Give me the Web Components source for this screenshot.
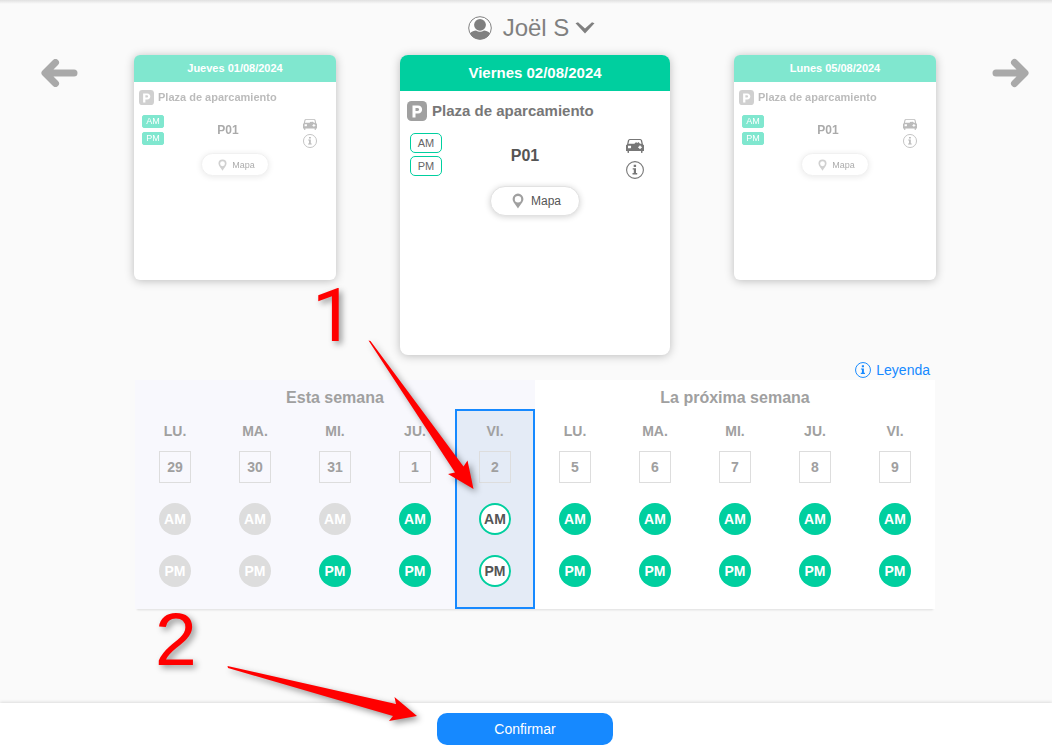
<!DOCTYPE html>
<html lang="es">
<head>
<meta charset="utf-8">
<meta name="viewport" content="width=device-width, initial-scale=1">
<title>Reservas</title>
<style>
  body {
    margin: 0;
    background: #fafafa;
    font-family: "Liberation Sans", Arial, sans-serif;
    --green: #00cf9f;
    --blue: #1689ff;
  }
</style>
</head>
<body>
<booking-app>
  <user-menu slot="header">Joël S</user-menu>
  <card-carousel slot="cards">
    <booking-card side day="Jueves 01/08/2024" place="P01">Plaza de aparcamiento</booking-card>
    <booking-card day="Viernes 02/08/2024" place="P01">Plaza de aparcamiento</booking-card>
    <booking-card side day="Lunes 05/08/2024" place="P01">Plaza de aparcamiento</booking-card>
  </card-carousel>
  <week-calendar slot="calendar">
    <step-mark number="1"></step-mark>
  </week-calendar>
  <confirm-bar slot="footer">
    <step-mark number="2" slot="mark"></step-mark>
    Confirmar
  </confirm-bar>
</booking-app>

<script>
const define = (name, html, setup) => {
  const template = document.createElement("template");
  template.innerHTML = html;

  customElements.define(name, class extends HTMLElement {
    constructor() {
      super();
      this.attachShadow({ mode: "open" }).appendChild(
        template.content.cloneNode(true)
      );
    }

    connectedCallback() {
      if (setup) setup(this, this.shadowRoot);
    }
  });
};

const icons = {
  user: `<svg viewBox="0 0 24 24"><circle cx="12" cy="12" r="11.3" fill="#fff" stroke="currentColor"/>
    <circle cx="12" cy="8.8" r="5.9" fill="currentColor"/>
    <path fill="currentColor" d="M1.9 17.2C4 15.3 6 14.5 8 14.5Q12 17 16 14.5C18 14.5 20 15.3 22.1 17.2A11.3 11.3 0 0 1 1.9 17.2Z"/></svg>`,
  chevron: `<svg viewBox="0 0 20 12"><path fill="currentColor" d="M.5 1.2 3 .2 10 6.600 17 .2l2.500 1L10 11.500Z"/></svg>`,
  arrow: `<svg viewBox="0 0 38 30"><path d="M5 15H33.5M23.5 4.5 34 15 23.5 25.5" fill="none" stroke="currentColor" stroke-width="7" stroke-linecap="round" stroke-linejoin="round"/></svg>`,
  parking: `<svg viewBox="0 0 20 20"><rect width="20" height="20" rx="4.5" fill="#a0a0a0"/>
    <path fill="#fff" fill-rule="evenodd" d="M5.5 4.5H11c5.500 0 5.500 8 0 8H8.500V16.500H5.500ZM8.500 7v3h2.100c2 0 2-3 0-3Z"/></svg>`,
  car: `<svg viewBox="0 0 18 14"><path fill="currentColor" fill-rule="evenodd" d="M3.500 0h11l1.500 1 1 4.500 1 .7V12h-1.500v1.300a.7.7 0 0 1-1.500 0V12H3v1.300a.7.7 0 0 1-1.500 0V12H0V6.200l1-.7L2 1ZM3.500 1 2.400 4.800H8.500C9 3.500 10.500 3.200 11.500 4L12.500 3l1.500 1.800h1.600L14.500 1ZM2 6.700v2.600h2.200c1 0 1-1 .8-2.600ZM13.500 6.500 13 7.700h-1v1h1l.5 1.200h1L15 8.700h1v-1h-1L14.500 6.500Z"/></svg>`,
  info: `<svg viewBox="0 0 18 18"><circle cx="9" cy="9" r="8.4" fill="none" stroke="currentColor" stroke-width="1.1"/>
    <path fill="currentColor" d="M7.7 3.7h2.400v2.200H7.700ZM6.700 7.200H10v4.900h1.200v1.400H6.500v-1.400h1.300V8.500H6.700Z"/></svg>`,
  pin: `<svg viewBox="0 0 12 16"><path fill="#a0a0a0" fill-rule="evenodd" d="M6 .6a5.400 5.400 0 0 1 5.400 5.400C11.400 9 8 12 6 15.500 4 12 .6 9 .6 6A5.400 5.400 0 0 1 6 .6ZM6 3.100a3.200 3.200 0 1 0 0 6.400 3.200 3.200 0 0 0 0-6.400Z"/></svg>`
};

define("ui-icon", `
  <style>
    :host { display: block; flex: none; }
    span { display: block; width: 100%; height: 100%; }
    svg { display: block; width: 100%; height: 100%; }
  </style>
  <span></span>
`, (el, root) => {
  root.querySelector("span").innerHTML = icons[el.getAttribute("name")] || "";
});

define("booking-app", `
  <style>
    :host {
      display: flex;
      flex-direction: column;
      min-height: 100vh;
      background: linear-gradient(#e0e0e0, #fafafa 4px);
    }
    main { flex: 1; padding-left: 18px; padding-bottom: 24px; }
  </style>
  <main>
    <slot name="header"></slot>
    <slot name="cards"></slot>
    <slot name="calendar"></slot>
  </main>
  <slot name="footer"></slot>
`);

define("user-menu", `
  <style>
    :host { display: flex; justify-content: center; height: 55px; padding-right: 7px; }
    button {
      display: flex;
      align-items: center;
      padding: 0;
      border: 0;
      background: none;
      color: #808080;
      font: 24px/28px "Liberation Sans", Arial, sans-serif;
      cursor: pointer;
    }
    .user { width: 24px; height: 24px; margin-right: 11px; }
    .chevron { width: 20px; height: 12px; margin-left: 6px; }
  </style>
  <button aria-haspopup="true">
    <ui-icon class="user" name="user"></ui-icon>
    <slot></slot>
    <ui-icon class="chevron" name="chevron"></ui-icon>
  </button>
`);

define("card-carousel", `
  <style>
    :host {
      display: flex;
      justify-content: space-between;
      align-items: flex-start;
      padding: 0 23px;
    }
    .cards { display: flex; align-items: flex-start; gap: 64px; }
    button {
      padding: 3px 0;
      border: 0;
      background: none;
      color: #a9a9a9;
      cursor: pointer;
    }
    ui-icon { width: 38px; height: 30px; }
    .prev ui-icon { transform: scaleX(-1); }
  </style>
  <button class="prev" aria-label="Anterior"><ui-icon name="arrow"></ui-icon></button>
  <div class="cards"><slot></slot></div>
  <button class="next" aria-label="Siguiente"><ui-icon name="arrow"></ui-icon></button>
`);

define("booking-card", `
  <style>
    :host {
      display: block;
      width: 270px;
      height: 300px;
      border-radius: 8px;
      background: #fff;
      box-shadow: 0 1px 10px rgba(0, 0, 0, .25);
      --head: 36px;
      --text: 15px;
      --place: 16px;
      --small: 12px;
      --tag-text: 11px;
      --tag-w: 32px;
      --tag-h: 20px;
      --gap: 3px;
      --p: 20px;
      --ico: 18px;
    }
    :host([side]) {
      width: 202px;
      height: 225px;
      border-radius: 6px;
      --head: 27px;
      --text: 11px;
      --place: 12px;
      --small: 9px;
      --tag-text: 9px;
      --tag-w: 22px;
      --tag-h: 13px;
      --gap: 4px;
      --p: 15px;
      --ico: 14px;
    }
    :host([side]) article { opacity: .5; }
    h2, h3 { margin: 0; font-size: var(--text); }
    h2 {
      height: var(--head);
      border-radius: 8px 8px 0 0;
      background: var(--green);
      color: #fff;
      line-height: var(--head);
      text-align: center;
    }
    h3 {
      display: flex;
      align-items: center;
      gap: 5px;
      padding: 10px 7px 12px;
      color: #777;
      line-height: var(--p);
    }
    .p { width: var(--p); height: var(--p); }
    .row { display: flex; align-items: center; padding: 0 26px 0 10px; }
    .tags, .icons { display: flex; flex-direction: column; gap: var(--gap); }
    .tags { align-self: flex-start; }
    .icons { align-items: center; gap: 8px; padding-top: 6px; color: #777; }
    .tags span {
      box-sizing: border-box;
      width: var(--tag-w);
      height: var(--tag-h);
      border: 1px solid var(--green);
      border-radius: 5px;
      color: #666;
      font-size: var(--tag-text);
      line-height: 18px;
      text-align: center;
    }
    strong {
      flex: 1;
      padding-right: 18px;
      color: #555;
      font-size: var(--place);
      text-align: center;
    }
    .car { width: var(--ico); height: 14px; }
    .info { width: var(--ico); height: var(--ico); }
    button {
      display: flex;
      align-items: center;
      justify-content: center;
      gap: 7px;
      width: 90px;
      height: 30px;
      margin: 7px auto 0;
      padding: 0 0 0 3px;
      border: 1px solid #e2e2e2;
      border-radius: 15px;
      background: #fff;
      box-shadow: 0 1px 6px rgba(0, 0, 0, .18);
      color: #555;
      font: var(--small) "Liberation Sans", Arial, sans-serif;
      cursor: pointer;
    }
    .pin { width: 12px; height: 16px; }

    :host([side]) h2 { border-radius: 6px 6px 0 0; }
    :host([side]) h3 { gap: 4px; padding: 8px 5px 10px; }
    :host([side]) .row { padding: 0 19px 0 8px; }
    :host([side]) .tags span {
      border-radius: 2px;
      background: var(--green);
      color: #fff;
      line-height: 10px;
    }
    :host([side]) strong { padding: 0 11px 4px 0; }
    :host([side]) .icons { gap: 4px; padding-top: 4px; }
    :host([side]) .car { height: 11px; }
    :host([side]) button { gap: 5px; width: 68px; height: 23px; margin-top: 5px; }
    :host([side]) .pin { width: 9px; height: 12px; }
  </style>
  <article>
    <h2></h2>
    <h3><ui-icon class="p" name="parking"></ui-icon><slot></slot></h3>
    <div class="row">
      <div class="tags"><span>AM</span><span>PM</span></div>
      <strong></strong>
      <div class="icons">
        <ui-icon class="car" name="car"></ui-icon>
        <ui-icon class="info" name="info"></ui-icon>
      </div>
    </div>
    <button><ui-icon class="pin" name="pin"></ui-icon>Mapa</button>
  </article>
`, (el, root) => {
  root.querySelector("h2").textContent = el.getAttribute("day");
  root.querySelector("strong").textContent = el.getAttribute("place");
});

// state of each half day: x = past, g = booked, o = selected
const days = [
  ["LU.", 29, "x", "x"],
  ["MA.", 30, "x", "x"],
  ["MI.", 31, "x", "g"],
  ["JU.", 1, "g", "g"],
  ["VI.", 2, "o", "o"],
  ["LU.", 5, "g", "g"],
  ["MA.", 6, "g", "g"],
  ["MI.", 7, "g", "g"],
  ["JU.", 8, "g", "g"],
  ["VI.", 9, "g", "g"]
];

define("week-calendar", `
  <style>
    :host {
      display: block;
      position: relative;
      max-width: 800px;
      margin: 5px auto 0;
    }
    .legend { display: flex; justify-content: flex-end; padding-right: 5px; }
    a {
      display: flex;
      align-items: center;
      gap: 5px;
      color: var(--blue);
      font-size: 14px;
      line-height: 20px;
      text-decoration: none;
    }
    a ui-icon { width: 16px; height: 16px; }
    table {
      width: 100%;
      table-layout: fixed;
      border-spacing: 0;
      background: linear-gradient(90deg, #f8f8fd 50%, #fff 50%);
      box-shadow: 0 3px 2px -2px #ddd;
      color: #a0a0a0;
      font-size: 14px;
      font-weight: bold;
      text-align: center;
    }
    th, td { box-sizing: border-box; height: 52px; padding: 0; }
    .weeks th { height: 29px; padding-top: 7px; font-size: 16px; line-height: 22px; }
    .names th { height: 32px; padding-top: 12px; line-height: 18px; }
    .pm td { height: 64px; padding-bottom: 12px; }
    .on { border: 0 solid var(--blue); border-width: 0 2px; background: #e4ebf6; }
    .names .on { border-top-width: 2px; padding-top: 10px; }
    .pm .on { border-bottom-width: 2px; padding-bottom: 10px; }
    .date {
      box-sizing: border-box;
      width: 32px;
      margin: 0 auto;
      border: 1px solid #ddd;
      line-height: 30px;
    }
    button {
      display: block;
      width: 32px;
      height: 32px;
      margin: 0 auto;
      padding: 0;
      border: 0;
      border-radius: 50%;
      background: #ddd;
      color: #fff;
      font: bold 14px "Liberation Sans", Arial, sans-serif;
    }
    .g { background: var(--green); }
    .o { border: 2px solid var(--green); background: #fff; color: #555; }
  </style>
  <div class="legend"><a href="#leyenda"><ui-icon name="info"></ui-icon>Leyenda</a></div>
  <table>
    <thead>
      <tr class="weeks"><th colspan="5">Esta semana</th><th colspan="5">La próxima semana</th></tr>
      <tr class="names"></tr>
    </thead>
    <tbody>
      <tr class="dates"></tr>
      <tr class="am"></tr>
      <tr class="pm"></tr>
    </tbody>
  </table>
  <slot></slot>
`, (el, root) => {
  const fill = (row, cell) => {
    root.querySelector(row).innerHTML = days.map(cell).join("");
  };
  const on = (day) => (day[2] === "o" ? ' class="on"' : "");

  fill(".names", (day) => `<th${on(day)}>${day[0]}</th>`);
  fill(".dates", (day) => `<td${on(day)}><div class="date">${day[1]}</div></td>`);
  fill(".am", (day) => `<td${on(day)}><button class="${day[2]}">AM</button></td>`);
  fill(".pm", (day) => `<td${on(day)}><button class="${day[3]}">PM</button></td>`);
});

define("confirm-bar", `
  <style>
    :host {
      display: flex;
      justify-content: center;
      position: relative;
      padding: 10px 2px 7px 0;
      background: #fff;
      box-shadow: 0 -1px 3px rgba(0, 0, 0, .12);
    }
    button {
      width: 176px;
      height: 32px;
      border: 0;
      border-radius: 10px;
      background: var(--blue);
      color: #fff;
      font: 14px "Liberation Sans", Arial, sans-serif;
      cursor: pointer;
    }
  </style>
  <button><slot></slot></button>
  <slot name="mark"></slot>
`);

// numbered red arrows that lie over the page
const marks = {
  1: `<text x="177" y="-19" font-family="Roboto, sans-serif">1</text>
    <path d="M233.5-19.5l2 .5L328.5 106.5l4-6L338.5 129l-25.5-15 7-1.500Z"/>`,
  2: `<text x="-371" y="-38">2</text>
    <path d="M-298.5-37 -130 1l-1.500-7L-109 13l-28 5 4-5L-298-35Z"/>`
};

define("step-mark", `
  <style>
    :host { position: absolute; top: 0; left: 0; pointer-events: none; }
    :host([number="2"]) { left: 50%; }
    svg {
      display: block;
      width: 1px;
      height: 1px;
      overflow: visible;
      fill: #f00;
      font-size: 75px;
      filter: drop-shadow(3px 3px 3px rgba(0, 0, 0, .4));
    }
  </style>
  <svg></svg>
`, (el, root) => {
  root.querySelector("svg").innerHTML = marks[el.getAttribute("number")];
});
</script>
</body>
</html>
